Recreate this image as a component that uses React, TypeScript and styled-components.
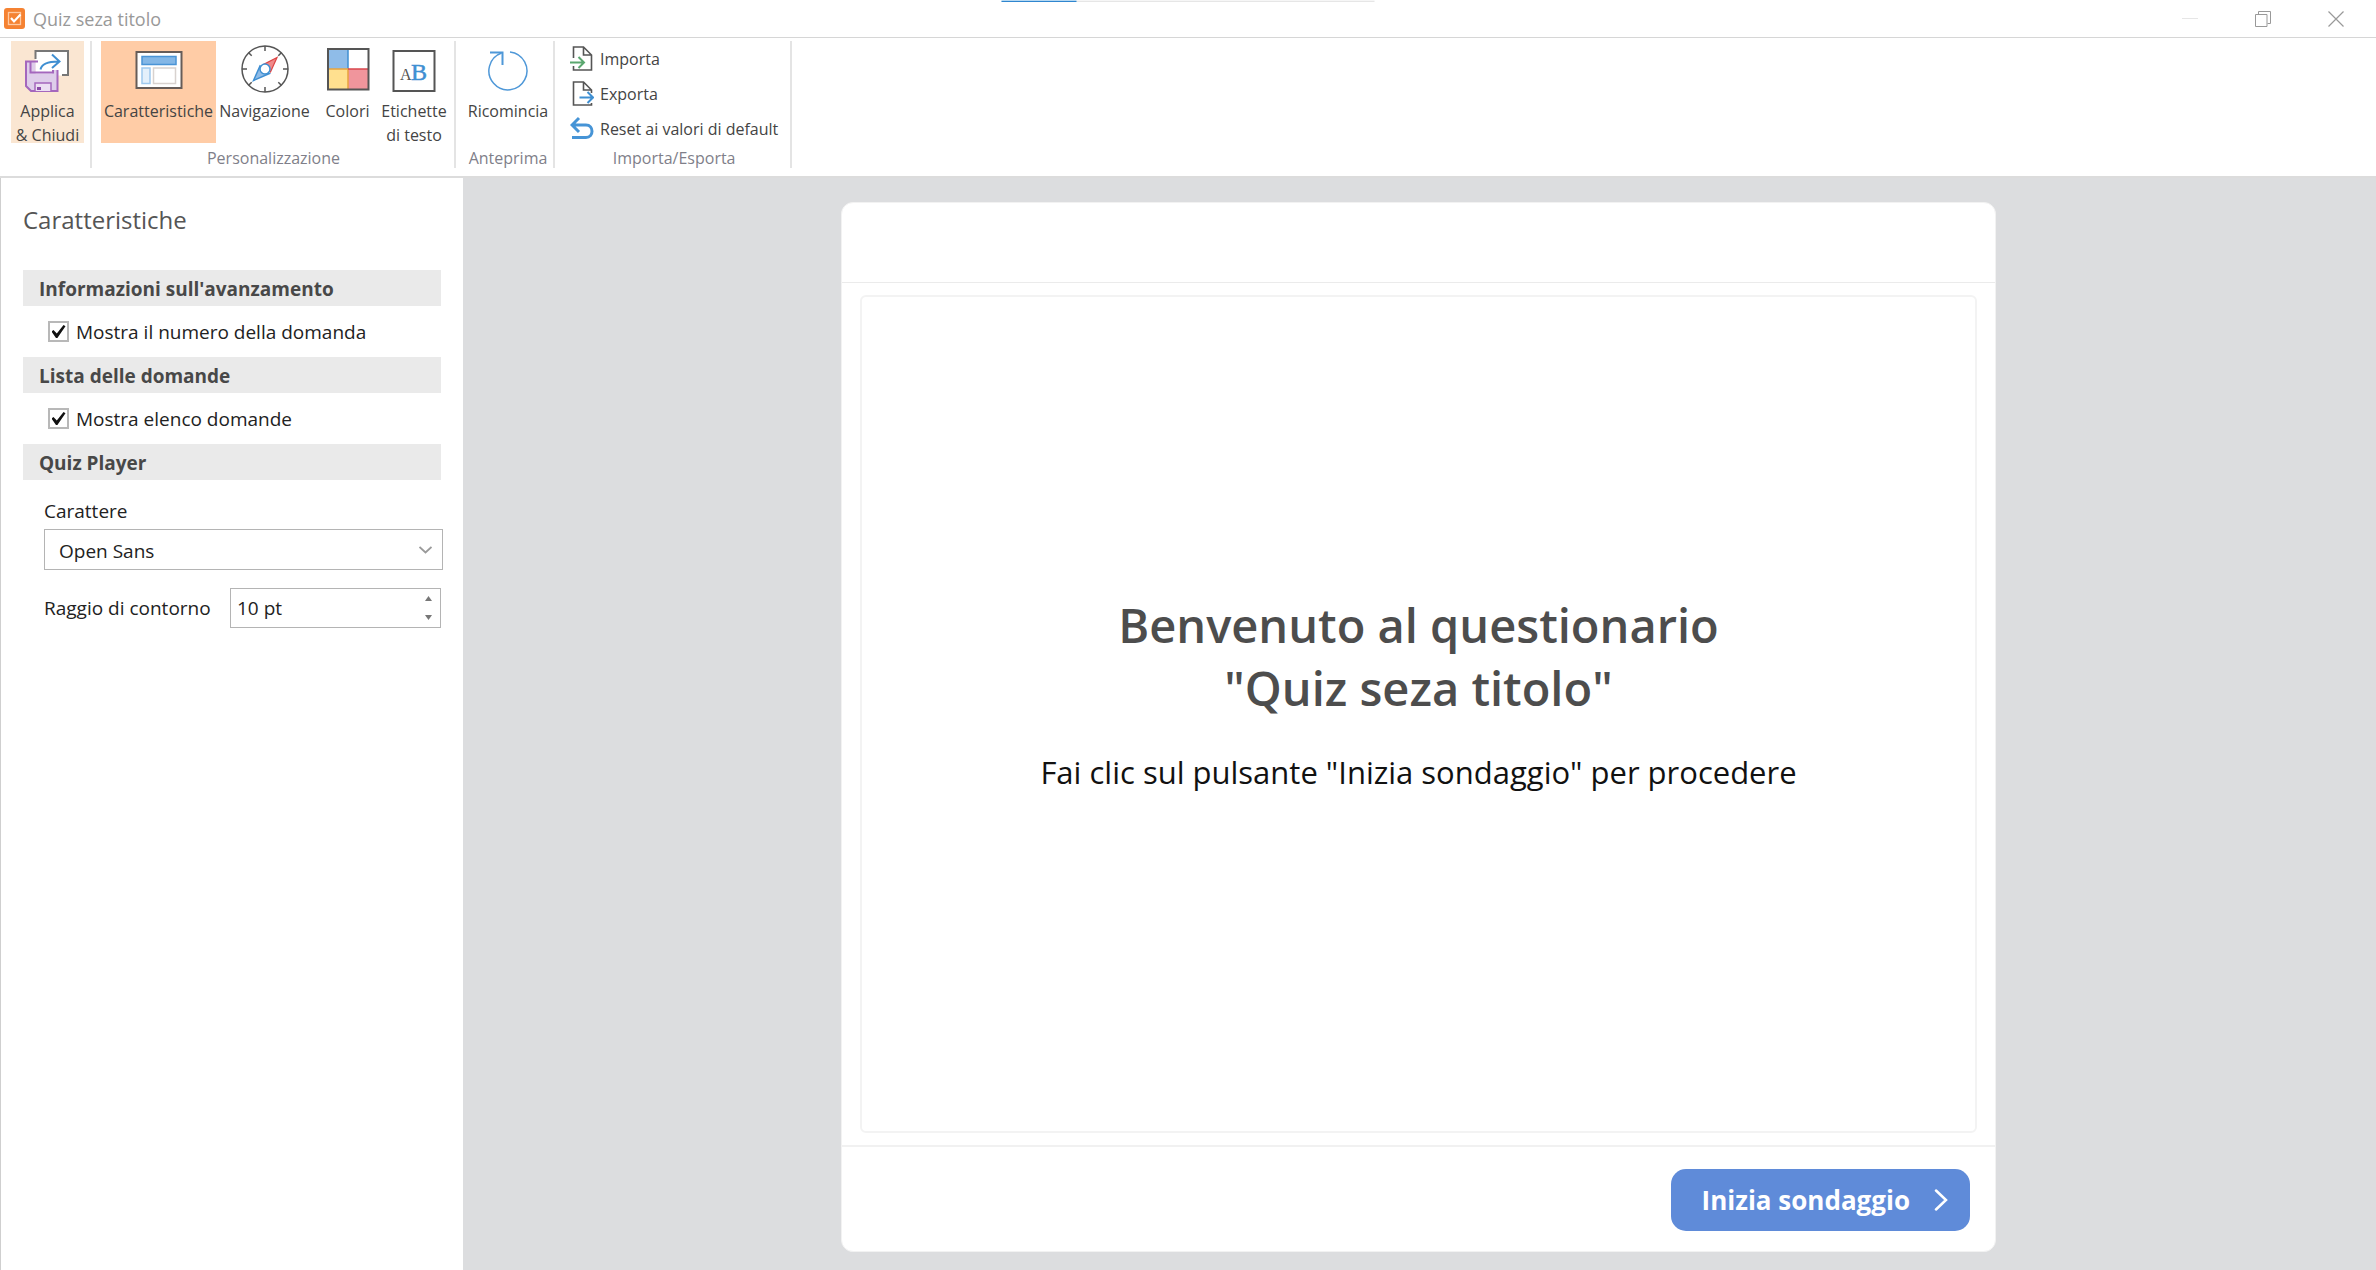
import React, { useState } from "react";
import styled, { createGlobalStyle } from "styled-components";

const Global = createGlobalStyle`
  *, *::before, *::after { box-sizing: border-box; }
  html, body, #root { height: 100%; margin: 0; }
  body { background: #fff; }
  body, button, input, select { font-family: "Open Sans", "Noto Sans", sans-serif; }
  button { border: 0; padding: 0; background: none; color: inherit; cursor: pointer; }
  h1, h2, h3, p { margin: 0; }
  svg { flex: none; }
`;

const Window = styled.div`
  min-height: 100%;
  display: flex;
  flex-direction: column;
`;

const LoadStrip = styled.div`
  position: absolute;
  top: 0;
  left: 50%;
  width: 373px;
  height: 2px;
  transform: translateX(-50%);
  background: linear-gradient(#f6f6f6 50%, #e6e6e6 50%);
`;

const LoadProgress = styled.div`
  width: 20%;
  height: 100%;
  background: linear-gradient(#b5d8f2 50%, #2f86cf 50%);
`;

const TitleBar = styled.header`
  height: 38px;
  display: flex;
  align-items: center;
  border-bottom: 1px solid #d6d6d6;
  padding: 0 32px 0 4px;
`;

const AppTitle = styled.h1`
  flex: 1;
  margin-left: 8px;
  color: #999;
  font-size: 18px;
  font-weight: 400;
  line-height: 24px;
`;

const WindowControls = styled.div`
  display: flex;
  gap: 57px;
`;

const WindowButton = styled.button`
  display: flex;
`;

const Ribbon = styled.nav`
  height: 140px;
  display: flex;
  padding: 3px 0 8px;
  border-bottom: 2px solid #dcdcdc;
`;

const Group = styled.section<{ $pad: string }>`
  display: flex;
  flex-direction: column;
  justify-content: space-between;
  padding: ${(p) => p.$pad};
  border-right: 2px solid #e4e4e4;
`;

const GroupRow = styled.div`
  display: flex;
`;

const GroupCaption = styled.div`
  color: #7f7f8a;
  font-size: 16px;
  line-height: 20px;
  text-align: center;
`;

const ToolButton = styled.button<{ $width: number; $fill?: string }>`
  width: ${(p) => p.$width}px;
  height: 102px;
  display: flex;
  flex-direction: column;
  align-items: center;
  gap: 6px;
  padding-top: 4px;
  background: ${(p) => p.$fill ?? "transparent"};
  color: #444;
  font-size: 16px;
  line-height: 24px;
  white-space: nowrap;
`;

const CommandList = styled.div`
  display: flex;
  flex-direction: column;
  gap: 10px;
  padding-top: 5px;
`;

const Command = styled.button`
  display: flex;
  align-items: center;
  gap: 6px;
  height: 25px;
  color: #444;
  font-size: 16px;
  line-height: 24px;
  white-space: nowrap;
`;

const Main = styled.div`
  flex: 1;
  display: flex;
`;

const Sidebar = styled.aside`
  width: 463px;
  flex: none;
  padding: 24px 22px;
  border-left: 1px solid #cfcfcf;
  color: #222;
  font-size: 19px;
  line-height: 24px;
`;

const PanelTitle = styled.h2`
  color: #555;
  font-size: 24px;
  font-weight: 400;
  line-height: 36px;
  margin-bottom: 32px;
`;

const SectionTitle = styled.h3`
  height: 36px;
  padding-left: 16px;
  background: #eaeaea;
  color: #484848;
  font-size: 19px;
  font-weight: 700;
  line-height: 38px;
`;

const CheckRow = styled.label`
  height: 51px;
  display: flex;
  align-items: center;
  gap: 7px;
  padding: 0 0 0 25px;
`;

const CheckBox = styled.input`
  appearance: none;
  width: 21px;
  height: 21px;
  margin: 0;
  border: 2px solid #b8b8b8;
  background: #fff;
  display: grid;
  place-items: center;
  &:checked::before {
    content: "";
    width: 14px;
    height: 13px;
    background: #111;
    clip-path: polygon(0 50%, 14% 38%, 38% 66%, 86% 0, 100% 10%, 42% 100%, 32% 100%);
  }
`;

const Fields = styled.div`
  padding: 19px 0 0 21px;
`;

const FieldLabel = styled.label`
  display: block;
  margin-bottom: 6px;
`;

const SelectFrame = styled.div`
  display: grid;
  align-items: center;
  margin-right: -2px;
  & > * { grid-area: 1 / 1; }
  & > svg { justify-self: end; margin-right: 11px; pointer-events: none; }
`;

const Select = styled.select`
  appearance: none;
  width: 100%;
  height: 41px;
  padding: 2px 14px 0;
  border: 1px solid #b4b4b4;
  border-radius: 0;
  background: #fff;
  color: #222;
  font-size: 19px;
`;

const FieldRow = styled.div`
  display: grid;
  grid-template-columns: 172px 1fr;
  align-items: center;
  gap: 14px;
  margin-top: 18px;
  white-space: nowrap;
`;

const Spinner = styled.div`
  min-width: 0;
  height: 40px;
  display: flex;
  border: 1px solid #b4b4b4;
`;

const SpinnerInput = styled.input`
  flex: 1;
  min-width: 0;
  padding: 0 6px;
  border: 0;
  background: none;
  color: #222;
  font-size: 19px;
`;

const SpinnerArrows = styled.div`
  width: 24px;
  display: flex;
  flex-direction: column;
  justify-content: center;
  gap: 14px;
  & > button { display: flex; justify-content: center; }
`;

const Workspace = styled.main`
  flex: 1;
  display: flex;
  justify-content: center;
  padding: 24px 26px 18px 24px;
  background: #dcdddf;
`;

const Player = styled.section`
  aspect-ratio: 11 / 10;
  display: flex;
  flex-direction: column;
  border: 1px solid #f2f2f2;
  border-radius: 12px;
  background: #fff;
`;

const PlayerHeader = styled.div`
  height: 80px;
  border-bottom: 1px solid #ebebeb;
`;

const Slide = styled.div`
  flex: 1;
  display: flex;
  flex-direction: column;
  align-items: center;
  justify-content: center;
  gap: 31px;
  margin: 12px 18px;
  padding-bottom: 42px;
  border: 2px solid #f3f3f3;
  border-radius: 6px;
  text-align: center;
`;

const SlideTitle = styled.h2`
  color: #4d4d4d;
  font-size: 47px;
  font-weight: 600;
  line-height: 63px;
`;

const SlideText = styled.p`
  color: #111;
  font-size: 31px;
  line-height: 42px;
`;

const PlayerFooter = styled.div`
  height: 106px;
  display: flex;
  justify-content: flex-end;
  align-items: flex-start;
  padding: 22px 25px;
  border-top: 2px solid #f1f1f1;
`;

const StartButton = styled.button`
  height: 62px;
  display: flex;
  align-items: center;
  gap: 24px;
  padding: 0 22px 0 31px;
  border-radius: 15px;
  background: #5f8bd9;
  color: #fff;
  font-size: 26px;
  font-weight: 700;
`;

const AppIcon = () => (
  <svg width="21" height="21" viewBox="0 0 21 21" fill="none">
    <rect width="21" height="21" rx="3" fill="#f58232" />
    <rect x="4.5" y="4.5" width="12" height="12" stroke="#ffc9a0" strokeWidth="1.3" />
    <path d="M7 10l3 3.4 6.5-7" stroke="#fff" strokeWidth="2.2" />
  </svg>
);

const SaveIcon = () => (
  <svg width="48" height="48" viewBox="0 0 48 48" fill="none">
    <path d="M11.5 6.500H44V30.500H11.500z" fill="#fff" />
    <path d="M11.500 14V6H44v24h-6" stroke="#777" strokeWidth="2" />
    <path d="M2 16.500h9.500v12H28v-3.500h6v21H6.500L2 42z" fill="#decdea" />
    <path d="M15 15.500v-8H42v21H35V23.500H29V27H15z" fill="#fff" />
    <path d="M14 16.500H2V41l5 5h26.500V25M6.500 16.500v11H29V25" stroke="#a467bd" strokeWidth="2" />
    <path d="M11 46v-8h16v8" fill="#ecdff3" stroke="#a467bd" strokeWidth="1.500" />
    <rect x="13" y="42" width="4" height="3" fill="#8b4ba8" />
    <path d="M16.500 24.500c1-5 6-8 18-8M28 9.500l7.500 7-7.500 6.500" stroke="#3f8fd2" strokeWidth="2" />
  </svg>
);

const LayoutIcon = () => (
  <svg width="48" height="48" viewBox="0 0 48 48" fill="none">
    <rect x="1.500" y="7" width="45" height="36" fill="#fff" stroke="#665c58" strokeWidth="2" />
    <rect x="7" y="11.500" width="34" height="8" fill="#84b7e6" stroke="#4a94d6" strokeWidth="1.500" />
    <rect x="7" y="23" width="8" height="15.500" fill="#e4f0fb" stroke="#9fc9ee" strokeWidth="1.500" />
    <rect x="18.500" y="23" width="22" height="15.500" stroke="#d8d2cf" strokeWidth="1.500" />
  </svg>
);

const CompassIcon = () => (
  <svg width="48" height="48" viewBox="0 0 48 48" fill="none">
    <circle cx="24" cy="24" r="23" stroke="#555" strokeWidth="1.500" />
    <path d="M24 1v5M24 42v5M1 24h5M42 24h5M7.700 7.700l3 3M37.300 37.300l3 3M40.300 7.700l-3 3M10.700 37.300l-3 3" stroke="#555" strokeWidth="1.500" />
    <path d="M36 12.500L22.500 19.500l7 7.500z" fill="#f08a8a" stroke="#dc4444" strokeWidth="1.200" />
    <path d="M12.500 35.500L19 21l9.500 7.500z" fill="#8fbce8" stroke="#3f8fd2" strokeWidth="1.500" />
    <circle cx="24" cy="24" r="5" fill="#fff" stroke="#3f8fd2" strokeWidth="1.500" />
  </svg>
);

const ColorsIcon = () => (
  <svg width="48" height="48" viewBox="0 0 48 48" fill="none">
    <path d="M4 4h20v20H4z" fill="#8fbce8" />
    <path d="M24 4h20v20H24z" fill="#fff" />
    <path d="M4 24h20v20H4z" fill="#ffe08f" />
    <path d="M24 24h20v20H24z" fill="#f0959c" />
    <path d="M24 4v20" stroke="#3f8fd2" strokeWidth="1.500" />
    <path d="M4 24h20v20" stroke="#e8a23e" strokeWidth="1.500" />
    <path d="M24 24h20" stroke="#d9464c" strokeWidth="1.500" />
    <rect x="4" y="4" width="40.500" height="40.500" stroke="#555" strokeWidth="2" />
  </svg>
);

const TextLabelIcon = () => (
  <svg width="48" height="48" viewBox="0 0 48 48" fill="none">
    <rect x="3.500" y="6" width="41" height="40" fill="#fff" stroke="#555" strokeWidth="2" />
    <text x="10" y="34.500" fontFamily="Liberation Serif, serif" fontSize="16" fill="#555">A</text>
    <text x="21" y="34.500" fontFamily="Liberation Serif, serif" fontSize="24" fill="#3f8fd2" stroke="#3f8fd2" strokeWidth="0.500">B</text>
  </svg>
);

const RestartIcon = () => (
  <svg width="48" height="48" viewBox="0 0 48 48" fill="none" stroke="#4f98d8" strokeWidth="1.500">
    <path d="M26 7A19 19 0 1 1 17.500 8" />
    <path d="M6 7.500h12.500V20" strokeWidth="2" />
  </svg>
);

const ImportIcon = () => (
  <svg width="24" height="25" viewBox="0 0 24 25" fill="none" stroke="#555" strokeWidth="1.600">
    <path d="M3.500 12V1h10L21.500 9v15h-18v-4M13.500 1v8h8" />
    <path d="M0 16.500h14M8.500 11l5.500 5.500L8.500 22" stroke="#5aa76f" strokeWidth="2" />
  </svg>
);

const ExportIcon = () => (
  <svg width="24" height="25" viewBox="0 0 24 25" fill="none" stroke="#555" strokeWidth="1.600">
    <path d="M21.500 12V9L13.500 1h-10v23h18v-2M13.500 1v8h8" />
    <path d="M9.500 16.500h13.500M17.500 11l5.500 5.500-5.500 5.500" stroke="#3f8fd2" strokeWidth="2" />
  </svg>
);

const ResetIcon = () => (
  <svg width="24" height="25" viewBox="0 0 24 25" fill="none" stroke="#4694d6" strokeWidth="3">
    <path d="M9 2L2 9l7 7M2 9h14c8 0 8 12.500 0 12.500H2" />
  </svg>
);

const Chevron = () => (
  <svg width="13" height="8" viewBox="0 0 13 8" fill="none" stroke="#9a9a9a" strokeWidth="1.800">
    <path d="M.500 1l6 5.500 6-5.500" />
  </svg>
);

const Arrow = ({ down = false }: { down?: boolean }) => (
  <svg width="7" height="5" viewBox="0 0 7 5" fill="#777">
    <path d={down ? "M0 0h7L3.500 5z" : "M0 5h7L3.500 0z"} />
  </svg>
);

export default function App() {
  const [numberShown, setNumberShown] = useState(true);
  const [listShown, setListShown] = useState(true);
  const [radius, setRadius] = useState(10);

  return (
    <Window>
      <Global />
      <LoadStrip><LoadProgress /></LoadStrip>
      <TitleBar>
        <AppIcon />
        <AppTitle>Quiz seza titolo</AppTitle>
        <WindowControls>
          <WindowButton aria-label="Riduci a icona">
            <svg width="16" height="16" stroke="#e6e6e6"><path d="M0 7.500h16" /></svg>
          </WindowButton>
          <WindowButton aria-label="Ripristina">
            <svg width="16" height="16" fill="none" stroke="#999">
              <path d="M3.500 3.500v-3h12v12h-3" />
              <path d="M.500 3.500h11.500v12H.500z" />
            </svg>
          </WindowButton>
          <WindowButton aria-label="Chiudi">
            <svg width="16" height="16" stroke="#999" strokeWidth="1.200"><path d="M.500.500l15 15M15.500.500l-15 15" /></svg>
          </WindowButton>
        </WindowControls>
      </TitleBar>

      <Ribbon>
        <Group $pad="0 6px 0 11px">
          <ToolButton $width={73} $fill="#fae6d2">
            <SaveIcon />
            <span>Applica<br />&amp; Chiudi</span>
          </ToolButton>
        </Group>
        <Group $pad="0 8px 0 9px">
          <GroupRow>
            <ToolButton $width={115} $fill="#ffcca6"><LayoutIcon />Caratteristiche</ToolButton>
            <ToolButton $width={97}><CompassIcon />Navigazione</ToolButton>
            <ToolButton $width={69}><ColorsIcon />Colori</ToolButton>
            <ToolButton $width={64}>
              <TextLabelIcon />
              <span>Etichette<br />di testo</span>
            </ToolButton>
          </GroupRow>
          <GroupCaption>Personalizzazione</GroupCaption>
        </Group>
        <Group $pad="0 2px 0 9px">
          <ToolButton $width={86}><RestartIcon />Ricomincia</ToolButton>
          <GroupCaption>Anteprima</GroupCaption>
        </Group>
        <Group $pad="0 12px 0 15px">
          <CommandList>
            <Command><ImportIcon />Importa</Command>
            <Command><ExportIcon />Exporta</Command>
            <Command><ResetIcon />Reset ai valori di default</Command>
          </CommandList>
          <GroupCaption>Importa/Esporta</GroupCaption>
        </Group>
      </Ribbon>

      <Main>
        <Sidebar>
          <PanelTitle>Caratteristiche</PanelTitle>
          <SectionTitle>Informazioni sull'avanzamento</SectionTitle>
          <CheckRow>
            <CheckBox type="checkbox" checked={numberShown} onChange={(e) => setNumberShown(e.target.checked)} />
            Mostra il numero della domanda
          </CheckRow>
          <SectionTitle>Lista delle domande</SectionTitle>
          <CheckRow>
            <CheckBox type="checkbox" checked={listShown} onChange={(e) => setListShown(e.target.checked)} />
            Mostra elenco domande
          </CheckRow>
          <SectionTitle>Quiz Player</SectionTitle>
          <Fields>
            <FieldLabel htmlFor="font">Carattere</FieldLabel>
            <SelectFrame>
              <Select id="font"><option>Open Sans</option></Select>
              <Chevron />
            </SelectFrame>
            <FieldRow>
              <label htmlFor="radius">Raggio di contorno</label>
              <Spinner>
                <SpinnerInput
                  id="radius"
                  value={`${radius} pt`}
                  onChange={(e) => setRadius(parseInt(e.target.value, 10) || 0)}
                />
                <SpinnerArrows>
                  <button aria-label="Aumenta" onClick={() => setRadius(radius + 1)}><Arrow /></button>
                  <button aria-label="Diminuisci" onClick={() => setRadius(Math.max(0, radius - 1))}><Arrow down /></button>
                </SpinnerArrows>
              </Spinner>
            </FieldRow>
          </Fields>
        </Sidebar>

        <Workspace>
          <Player>
            <PlayerHeader />
            <Slide>
              <SlideTitle>Benvenuto al questionario<br />"Quiz seza titolo"</SlideTitle>
              <SlideText>Fai clic sul pulsante "Inizia sondaggio" per procedere</SlideText>
            </Slide>
            <PlayerFooter>
              <StartButton>
                Inizia sondaggio
                <svg width="14" height="22" viewBox="0 0 14 22" fill="none" stroke="#fff" strokeWidth="2.500" strokeLinecap="round">
                  <path d="M2 1.500l10 9.500L2 20.500" />
                </svg>
              </StartButton>
            </PlayerFooter>
          </Player>
        </Workspace>
      </Main>
    </Window>
  );
}
